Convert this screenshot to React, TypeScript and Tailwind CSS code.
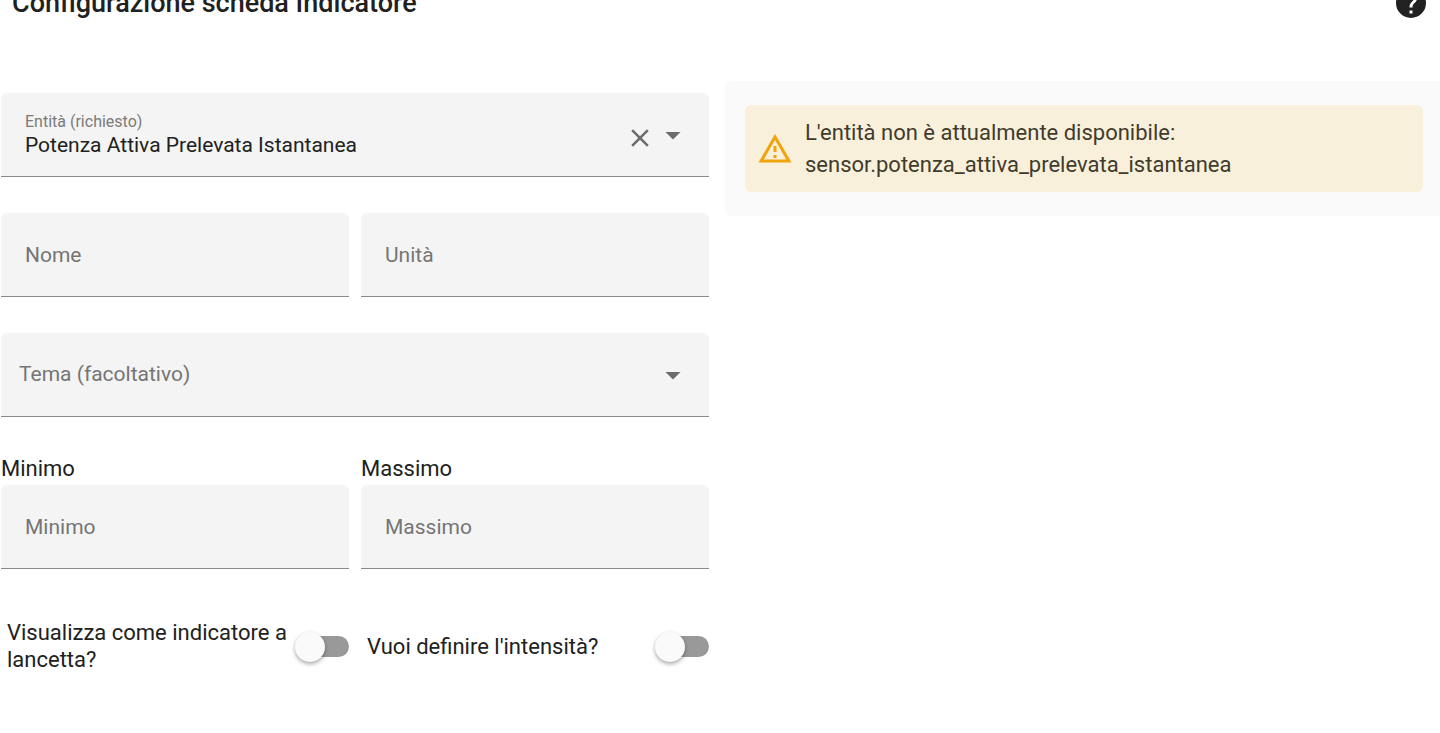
import React, { useState } from "react";

const fieldBox =
  "h-[84px] w-full rounded-t-md border-b border-[#8a8a8a] bg-[#f4f4f4] text-[21px]";

function TextField({ name, label }: { name: string; label: string }) {
  return (
    <input
      type="text"
      name={name}
      aria-label={label}
      placeholder={label}
      className={`${fieldBox} px-6 outline-none placeholder:text-[#757575]`}
    />
  );
}

function NumberField({ name, label }: { name: string; label: string }) {
  return (
    <div className="min-w-0">
      <label htmlFor={name} className="block text-[22px] leading-8">
        {label}
      </label>
      <input
        id={name}
        type="text"
        inputMode="numeric"
        placeholder={label}
        className={`${fieldBox} block px-6 outline-none placeholder:text-[#757575]`}
      />
    </div>
  );
}

function Toggle({ name, label }: { name: string; label: string }) {
  return (
    <div className="flex items-center gap-2 pl-1.5">
      <label htmlFor={name} className="min-w-0 flex-1 text-[22px] leading-[27px]">
        {label}
      </label>
      <input
        id={name}
        type="checkbox"
        role="switch"
        className="relative h-[21px] w-12 shrink-0 cursor-pointer appearance-none rounded-full bg-[#999999] before:absolute before:-top-1 before:-left-1.5 before:size-[30px] before:rounded-full before:bg-[#fafafa] before:shadow-[0_2px_4px_rgba(0,0,0,0.35)] checked:bg-sky-300 checked:before:left-6 checked:before:bg-sky-500"
      />
    </div>
  );
}

function MenuDown() {
  return (
    <svg viewBox="0 0 24 24" className="size-9" fill="currentColor" aria-hidden="true">
      <path d="M7,10L12,15L17,10H7Z" />
    </svg>
  );
}

export default function App() {
  const [entity, setEntity] = useState("Potenza Attiva Prelevata Istantanea");

  return (
    <div className="overflow-hidden bg-white font-[Roboto,sans-serif] text-[#212121]">
      <header className="-mt-[15px] flex items-center justify-between pr-[11px] pl-3">
        <h1 className="text-[27px] leading-9 font-medium">Configurazione scheda Indicatore</h1>
        <button type="button" aria-label="Aiuto" className="cursor-pointer">
          <svg viewBox="0 0 24 24" className="size-9" fill="currentColor" aria-hidden="true">
            <path d="M15.07,11.25L14.17,12.17C13.45,12.89 13,13.5 13,15H11V14.5C11,13.39 11.45,12.39 12.17,11.67L13.41,10.41C13.78,10.05 14,9.55 14,9C14,7.89 13.1,7 12,7A2,2 0 0,0 10,9H8A4,4 0 0,1 12,5A4,4 0 0,1 16,9C16,9.88 15.64,10.67 15.07,11.25M13,19H11V17H13M12,2A10,10 0 0,0 2,12A10,10 0 0,0 12,22A10,10 0 0,0 22,12C22,6.47 17.5,2 12,2Z" />
          </svg>
        </button>
      </header>

      <main className="mt-15 grid grid-cols-[708fr_715fr] items-start gap-4 pl-px">
        <form className="mt-3 min-w-0">
          <div className={`${fieldBox} flex items-center pr-[18px] pl-6`}>
            <div className="flex min-w-0 flex-1 flex-col pt-0.5">
              <label htmlFor="entity" className="text-base leading-5 text-[#7a7a7a]">
                Entità (richiesto)
              </label>
              <input
                id="entity"
                type="text"
                value={entity}
                onChange={(e) => setEntity(e.target.value)}
                className="h-7 w-full bg-transparent text-[21px] outline-none"
              />
            </div>
            <div className="flex items-end text-[#6b6b6b]">
              <button
                type="button"
                aria-label="Cancella"
                onClick={() => setEntity("")}
                className="cursor-pointer"
              >
                <svg viewBox="0 0 24 24" className="size-[30px]" fill="currentColor" aria-hidden="true">
                  <path d="M19,6.41L17.59,5L12,10.59L6.41,5L5,6.41L10.59,12L5,17.59L6.41,19L12,13.41L17.59,19L19,17.59L13.41,12L19,6.41Z" />
                </svg>
              </button>
              <button type="button" aria-label="Apri" className="cursor-pointer">
                <MenuDown />
              </button>
            </div>
          </div>

          <div className="mt-9 grid grid-cols-2 gap-3">
            <TextField name="name" label="Nome" />
            <TextField name="unit" label="Unità" />
          </div>

          <div className="mt-9 grid items-center">
            <select
              aria-label="Tema (facoltativo)"
              defaultValue=""
              className={`${fieldBox} col-start-1 row-start-1 appearance-none pr-14 pl-[18px] text-[#757575] outline-none`}
            >
              <option value="">Tema (facoltativo)</option>
              <option value="default">default</option>
            </select>
            <div className="pointer-events-none col-start-1 row-start-1 mr-[18px] justify-self-end text-[#6b6b6b]">
              <MenuDown />
            </div>
          </div>

          <div className="mt-9 grid grid-cols-2 gap-3">
            <NumberField name="min" label="Minimo" />
            <NumberField name="max" label="Massimo" />
          </div>

          <div className="mt-[50px] grid grid-cols-2 gap-3">
            <Toggle name="needle" label="Visualizza come indicatore a lancetta?" />
            <Toggle name="severity" label="Vuoi definire l'intensità?" />
          </div>
        </form>

        <section className="min-w-0 rounded-l-md bg-[#fafafa] py-6 pr-[17px] pl-5">
          <div
            role="alert"
            className="flex items-center gap-3 rounded-md bg-[#f9f0dc] px-3 pt-3 pb-[11px] text-[#413b2c]"
          >
            <svg viewBox="0 0 24 24" className="size-9 shrink-0 text-[#f0a30a]" fill="currentColor" aria-hidden="true">
              <path d="M12,2L1,21H23M12,6L19.53,19H4.47M11,10V14H13V10M11,16V18H13V16" />
            </svg>
            <p className="min-w-0 text-[22px] leading-8 break-words">
              L'entità non è attualmente disponibile:
              <br />
              sensor.potenza_attiva_prelevata_istantanea
            </p>
          </div>
        </section>
      </main>
    </div>
  );
}
